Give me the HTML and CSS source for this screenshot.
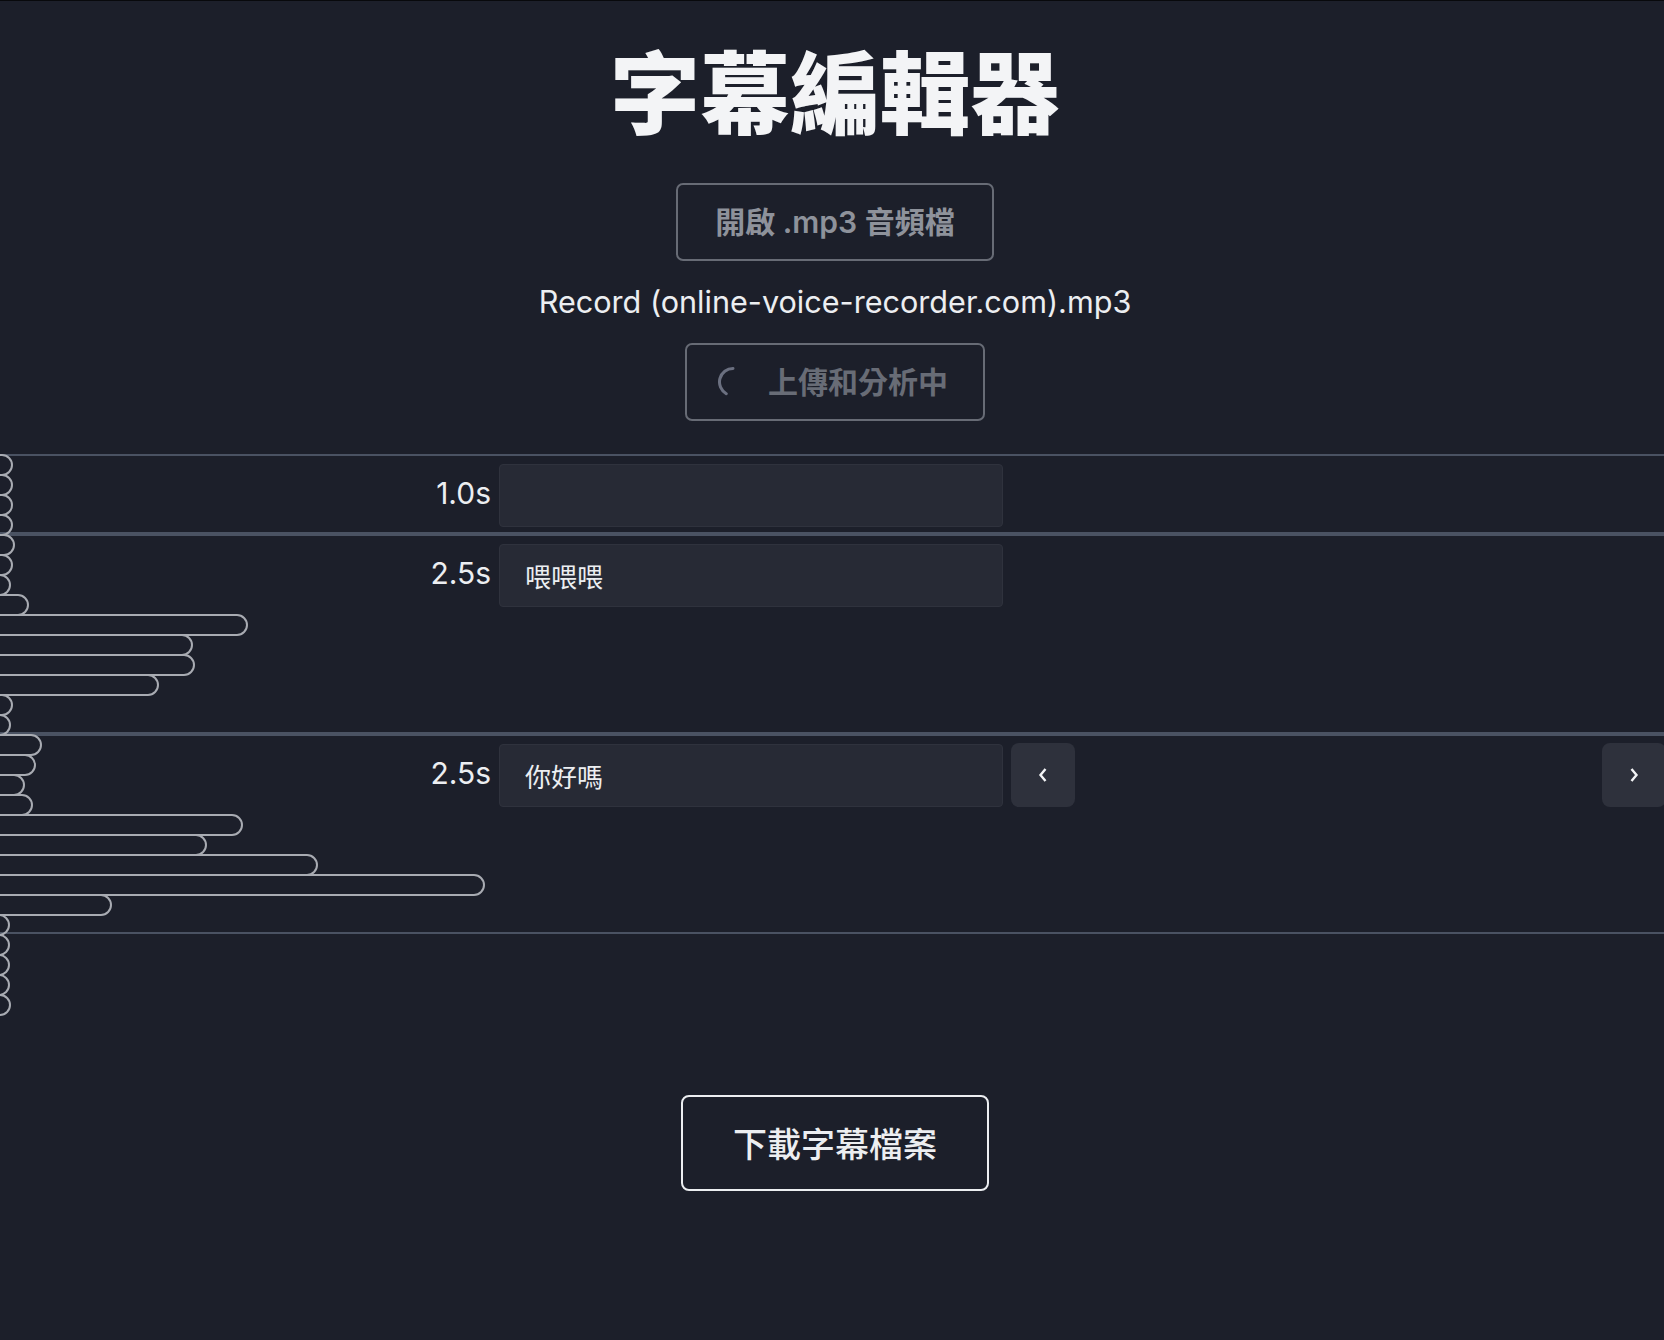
FILE: index.html
```html
<!DOCTYPE html>
<html lang="zh-Hant">
<head>
<meta charset="utf-8">
<title>字幕編輯器</title>
<link rel="stylesheet" href="styles.css">
</head>
<body>
<main class="app">
  <h1 class="title">字幕編輯器</h1>
  <button class="btn btn-open" type="button">開啟 .mp3 音頻檔</button>
  <p class="filename">Record (online-voice-recorder.com).mp3</p>
  <button class="btn btn-loading" type="button" disabled>
    <svg class="spinner" viewBox="0 0 30 30" width="30" height="30" aria-hidden="true">
      <path d="M15 1.5 A13.5 13.5 0 0 0 8.25 26.69" fill="none" stroke="#6b7080" stroke-width="3" stroke-linecap="round"/>
    </svg>
    <span>上傳和分析中</span>
  </button>

  <section class="timeline">
    <div class="waveform" aria-hidden="true">
      <div class="bar" style="width:43px"></div>
      <div class="bar" style="width:43px"></div>
      <div class="bar" style="width:43px"></div>
      <div class="bar" style="width:43px"></div>
      <div class="bar" style="width:45px"></div>
      <div class="bar" style="width:43px"></div>
      <div class="bar" style="width:41px"></div>
      <div class="bar" style="width:59px"></div>
      <div class="bar" style="width:278px"></div>
      <div class="bar" style="width:223px"></div>
      <div class="bar" style="width:225px"></div>
      <div class="bar" style="width:189px"></div>
      <div class="bar" style="width:43px"></div>
      <div class="bar" style="width:41px"></div>
      <div class="bar" style="width:72px"></div>
      <div class="bar" style="width:66px"></div>
      <div class="bar" style="width:55px"></div>
      <div class="bar" style="width:63px"></div>
      <div class="bar" style="width:273px"></div>
      <div class="bar" style="width:237px"></div>
      <div class="bar" style="width:348px"></div>
      <div class="bar" style="width:515px"></div>
      <div class="bar" style="width:142px"></div>
      <div class="bar" style="width:40px"></div>
      <div class="bar" style="width:40px"></div>
      <div class="bar" style="width:40px"></div>
      <div class="bar" style="width:40px"></div>
      <div class="bar" style="width:41px"></div>
    </div>

    <div class="row" style="height:80px">
      <span class="time">1.0s</span>
      <input class="caption" type="text" value="">
    </div>
    <div class="row" style="height:200px">
      <span class="time">2.5s</span>
      <input class="caption" type="text" value="喂喂喂">
    </div>
    <div class="row" style="height:200px">
      <span class="time">2.5s</span>
      <input class="caption" type="text" value="你好嗎">
      <button class="nav-btn" type="button" aria-label="上一個">
        <svg viewBox="0 0 10 16" width="10" height="16" aria-hidden="true"><polyline points="7.5,2 2.5,8 7.5,14" fill="none" stroke="#f3f4f6" stroke-width="2.4" stroke-linejoin="miter"/></svg>
      </button>
      <button class="nav-btn nav-next" type="button" aria-label="下一個">
        <svg viewBox="0 0 10 16" width="10" height="16" aria-hidden="true"><polyline points="2.5,2 7.5,8 2.5,14" fill="none" stroke="#f3f4f6" stroke-width="2.4" stroke-linejoin="miter"/></svg>
      </button>
    </div>
  </section>

  <button class="btn-download" type="button">下載字幕檔案</button>
</main>
</body>
</html>
```

FILE: styles.css
```css
* { box-sizing: border-box; }

html, body {
  margin: 0;
  padding: 0;
  background: #1c1f2a;
  overflow-x: hidden;
}

body {
  border-top: 1px solid #08090c;
  font-family: Inter, "Noto Sans CJK TC", "Noto Sans", sans-serif;
  color: #e5e7eb;
  min-height: 1340px;
}

.app {
  width: 1670px;
  display: flex;
  flex-direction: column;
  align-items: center;
}

.title {
  margin: 42px 0 0;
  font-family: "Noto Sans CJK TC", sans-serif;
  font-size: 90px;
  line-height: 90px;
  font-weight: 900;
  color: #f3f4f6;
  letter-spacing: 0;
}

.btn {
  display: flex;
  align-items: center;
  background: transparent;
  border: 2px solid #676b75;
  border-radius: 7px;
  padding: 16px 33px;
  font-family: Inter, "Noto Sans CJK TC", sans-serif;
  font-size: 30px;
  line-height: 42px;
  font-weight: 600;
}

.btn-open {
  margin-top: 50px;
  padding: 16px 37px;
  color: #8e929b;
}

.filename {
  margin: 20px 0 20px;
  font-size: 30.6px;
  line-height: 42px;
  color: #eceef1;
}

.btn-loading {
  color: #686c76;
  padding: 16px 35px 16px 31px;
  gap: 20px;
  font-weight: 600;
}

.spinner {
  display: block;
  flex: none;
}

.timeline {
  position: relative;
  width: 100%;
  margin-top: 33px;
}

.waveform {
  position: absolute;
  top: 0;
  left: -30px;
  display: flex;
  flex-direction: column;
  align-items: flex-start;
  z-index: 2;
  pointer-events: none;
}

.bar {
  height: 22px;
  border: 2px solid #a8abb2;
  border-radius: 0 11px 11px 0;
  margin-top: -2px;
}

.bar:first-child { margin-top: 0; }

.row {
  display: flex;
  align-items: flex-start;
  gap: 8px;
  padding-top: 8px;
  border-top: 2px solid #4a5262;
  border-bottom: 2px solid #4a5262;
}

.time {
  flex: 0 0 491px;
  text-align: right;
  font-size: 30px;
  line-height: 58px;
  color: #eceef1;
}

.caption {
  width: 504px;
  height: 63px;
  background: #272a35;
  border: 1px solid #2f323d;
  border-radius: 4px;
  padding: 0 25px;
  font-family: "Noto Sans CJK TC", sans-serif;
  font-size: 26px;
  color: #eceef1;
  outline: none;
}

.nav-btn {
  width: 64px;
  height: 64px;
  margin-top: -1px;
  display: flex;
  align-items: center;
  justify-content: center;
  background: #2e313c;
  border: none;
  border-radius: 8px;
  padding: 0;
}

.nav-btn svg { display: block; }

.nav-next {
  margin-left: auto;
  margin-right: 4px;
}

.btn-download {
  margin-top: 161px;
  background: transparent;
  border: 2px solid #eceef1;
  border-radius: 8px;
  padding: 20px 50px;
  font-family: "Noto Sans CJK TC", sans-serif;
  font-size: 34px;
  line-height: 52px;
  font-weight: 500;
  color: #eceef1;
}
```
